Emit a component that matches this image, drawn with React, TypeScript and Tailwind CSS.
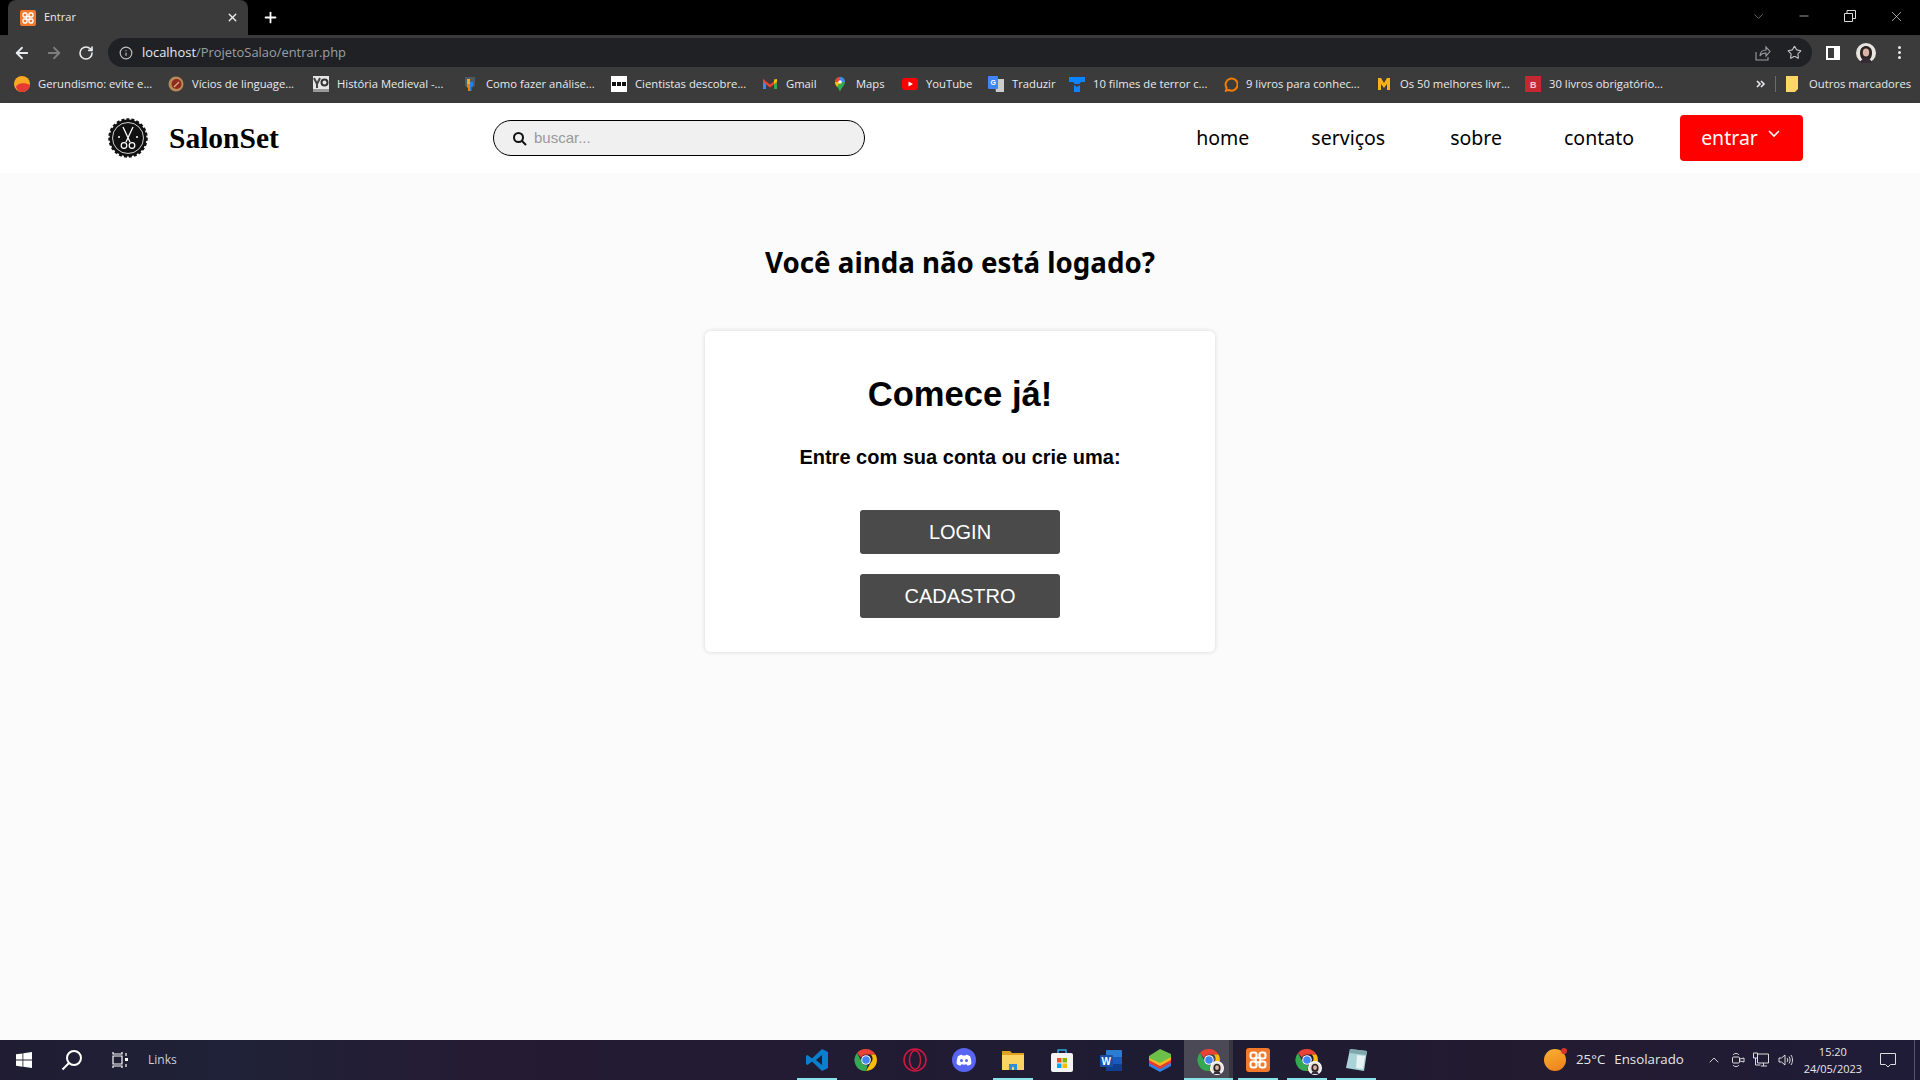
import { ArrowLeft, ArrowRight, ChevronDown, Info, Minus, Plus, RotateCw, Star, X } from "lucide-react";
import type { ReactNode } from "react";

const Xampp = ({ size = 16 }: { size?: number }) => (
  <svg width={size} height={size} viewBox="0 0 16 16" className="shrink-0">
    <rect width="16" height="16" rx="2" fill="#f4792b" />
    <g fill="none" stroke="#fff" strokeWidth="1.400">
      <rect x="3" y="3" width="4" height="4" rx="1.500" />
      <rect x="9" y="3" width="4" height="4" rx="1.500" />
      <rect x="3" y="9" width="4" height="4" rx="1.500" />
      <rect x="9" y="9" width="4" height="4" rx="1.500" />
      <rect x="6.500" y="6.500" width="3" height="3" />
    </g>
  </svg>
);

const Chrome = ({ size = 24 }: { size?: number }) => (
  <svg width={size} height={size} viewBox="0 0 24 24" className="shrink-0">
    <path d="M12 1a11 11 0 0 1 9.500 5.500H12a5.500 5.500 0 0 0-5 3.200L3 5A11 11 0 0 1 12 1Z" fill="#ea4335" />
    <path d="M21.500 6.500A11 11 0 0 1 12 23l4.700-8.200a5.500 5.500 0 0 0 0-8.300Z" fill="#fbbc04" />
    <path d="M3 5l4.700 8.500a5.500 5.500 0 0 0 6 3.700L12 23A11 11 0 0 1 3 5Z" fill="#34a853" />
    <circle cx="12" cy="12" r="4.800" fill="#fff" />
    <circle cx="12" cy="12" r="3.800" fill="#4285f4" />
  </svg>
);

const Avatar = ({ size = 20 }: { size?: number }) => (
  <svg width={size} height={size} viewBox="0 0 20 20" className="shrink-0">
    <circle cx="10" cy="10" r="10" fill="#e8e4e0" />
    <path d="M4 10c0-5 3-7 6-7s6 2 6 7c0 3-1 5-2 6H6c-1-1-2-3-2-6Z" fill="#2b2222" />
    <ellipse cx="10" cy="9.500" rx="3.200" ry="4" fill="#d9b3a3" />
    <path d="M4 20c1-4 4-5 6-5s5 1 6 5Z" fill="#332a33" />
  </svg>
);

const ChromeBadge = () => (
  <div className="relative">
    <Chrome />
    <div className="absolute -right-[3px] -bottom-[3px] rounded-full bg-white p-px">
      <Avatar size={12} />
    </div>
  </div>
);

const favicons: Record<string, ReactNode> = {
  gerund: (
    <svg width="16" height="16" viewBox="0 0 16 16">
      <circle cx="8" cy="8" r="8" fill="#f9a825" />
      <path d="M2 11c1-4 9-5 14-2-1 5-4 7-8 7-3 0-5-2-6-5Z" fill="#e53935" />
    </svg>
  ),
  vicios: (
    <svg width="16" height="16" viewBox="0 0 16 16">
      <circle cx="8" cy="8" r="7.500" fill="#b98a55" />
      <circle cx="8.500" cy="8" r="5" fill="#8f2a1c" />
      <path d="M6 11l5-5" stroke="#d9b27a" strokeWidth="1.200" />
    </svg>
  ),
  historia: (
    <svg width="16" height="16" viewBox="0 0 16 16">
      <rect width="16" height="16" fill="#e6e6e6" />
      <path d="M1 2l3 6 3-6M4 8v4" stroke="#444" strokeWidth="2" fill="none" />
      <circle cx="11.500" cy="6.500" r="3" fill="none" stroke="#333" strokeWidth="2" />
      <rect y="13" width="16" height="3" fill="#999" />
    </svg>
  ),
  analise: (
    <svg width="16" height="16" viewBox="0 0 16 16">
      <path d="M3 1h10v9l-3 2v3H6v-3L3 10Z" fill="#4c5a66" />
      <path d="M5 3h3v5H5Z" fill="#f9a825" />
      <path d="M8 6h3v4l-2 1v4H8Z" fill="#1e88e5" />
      <path d="M5 8h3v7H6v-3L5 11Z" fill="#f57c00" />
    </svg>
  ),
  cientistas: (
    <svg width="16" height="16" viewBox="0 0 16 16">
      <rect width="16" height="16" fill="#fff" />
      <path d="M1 6h4v4H1ZM6 6h4v4H6ZM11 6h4v4h-4Z" fill="#111" />
    </svg>
  ),
  gmail: (
    <svg width="16" height="16" viewBox="0 0 16 16">
      <path d="M1 3v10h3V7Z" fill="#4285f4" />
      <path d="M15 3v10h-3V7Z" fill="#34a853" />
      <path d="M1 3l7 5.500L15 3v3l-7 5.500L1 6Z" fill="#ea4335" />
      <path d="M12 3.500L15 3v3l-3 2Z" fill="#fbbc04" />
    </svg>
  ),
  maps: (
    <svg width="16" height="16" viewBox="0 0 16 16">
      <path d="M8 1a5 5 0 0 1 5 5c0 3-3 5-5 9.500C6 11 3 9 3 6a5 5 0 0 1 5-5Z" fill="#34a853" />
      <path d="M8 1a5 5 0 0 1 5 5L8 6Z" fill="#4285f4" />
      <path d="M3 6a5 5 0 0 1 5-5v5Z" fill="#ea4335" />
      <path d="M3 6h5L5 11C4 9.500 3 8 3 6Z" fill="#fbbc04" />
      <circle cx="8" cy="6" r="1.800" fill="#fff" />
    </svg>
  ),
  youtube: (
    <svg width="16" height="16" viewBox="0 0 16 16">
      <rect y="2" width="16" height="12" rx="3" fill="#f00" />
      <path d="M6.500 5.500L11 8l-4.500 2.500Z" fill="#fff" />
    </svg>
  ),
  traduzir: (
    <svg width="16" height="16" viewBox="0 0 16 16">
      <path d="M6 3h10v13H8Z" fill="#ccc" />
      <rect width="10" height="13" rx="1" fill="#4285f4" />
      <text x="2.500" y="9" fontSize="7" fontWeight="700" fill="#fff" fontFamily="Liberation Sans">G</text>
    </svg>
  ),
  filmes: (
    <svg width="16" height="16" viewBox="0 0 16 16">
      <path d="M0 1h16v5h-4L10 8H6L4 6H0Z" fill="#0a84ff" />
      <path d="M5 9l3 2 3-2v7H5Z" fill="#0a84ff" />
    </svg>
  ),
  livros: (
    <svg width="16" height="16" viewBox="0 0 16 16">
      <path d="M4 14.500l.6-2.600A6 6 0 1 1 7 14c-1 0-2 0-3 .5Z" fill="none" stroke="#f57c00" strokeWidth="2" />
    </svg>
  ),
  melhores: (
    <svg width="16" height="16" viewBox="0 0 16 16">
      <path d="M2 2h3l3 5 3-5h3v12h-3V8l-3 4-3-4v6H2Z" fill="#fbb117" />
    </svg>
  ),
  obrig: (
    <svg width="16" height="16" viewBox="0 0 16 16">
      <rect width="16" height="16" fill="#c62833" />
      <text x="5" y="12" fontSize="9" fontWeight="700" fill="#f6c9cc" fontFamily="Liberation Sans">B</text>
    </svg>
  ),
};

const bookmarks = [
  { icon: "gerund", label: "Gerundismo: evite e...", width: "w-[114px]" },
  { icon: "vicios", label: "Vícios de linguage...", width: "w-[105px]" },
  { icon: "historia", label: "História Medieval -...", width: "w-[109px]" },
  { icon: "analise", label: "Como fazer análise...", width: "w-[109px]" },
  { icon: "cientistas", label: "Cientistas descobre...", width: "w-[111px]" },
  { icon: "gmail", label: "Gmail", width: "w-[30px]" },
  { icon: "maps", label: "Maps", width: "w-[30px]" },
  { icon: "youtube", label: "YouTube", width: "w-[46px]" },
  { icon: "traduzir", label: "Traduzir", width: "w-[41px]" },
  { icon: "filmes", label: "10 filmes de terror c...", width: "w-[113px]" },
  { icon: "livros", label: "9 livros para conhec...", width: "w-[114px]" },
  { icon: "melhores", label: "Os 50 melhores livr...", width: "w-[109px]" },
  { icon: "obrig", label: "30 livros obrigatório...", width: "w-[114px]" },
];

const BrowserChrome = () => (
  <div className="font-['Open_Sans',sans-serif] text-white">
    {/* abas */}
    <div className="flex h-[35px] items-stretch bg-black">
      <div className="ml-2 flex w-[240px] items-center rounded-t-lg bg-[#3b3b3b] pr-[9px] pl-3">
        <Xampp />
        <span className="ml-2 text-[11px] text-[#e8eaed]">Entrar</span>
        <X className="ml-auto" size={13} strokeWidth={2.5} color="#e8eaed" />
      </div>
      <div className="ml-[14px] flex items-center">
        <Plus size={17} strokeWidth={2.5} />
      </div>
      <div className="ml-auto flex items-center pr-[15px] pb-[3px] text-[#ddd]">
        <ChevronDown className="mr-[31px]" size={15} strokeWidth={1} color="#aaa" />
        <Minus className="mr-[33px]" size={14} strokeWidth={1.2} />
        <svg className="mr-[32px]" width="12" height="12" viewBox="0 0 12 12" fill="none" stroke="#ddd">
          <path d="M.5 3.500h8v8h-8ZM3 3.500V.500h8.500v8H8.500" />
        </svg>
        <X size={17} strokeWidth={1} />
      </div>
    </div>
    {/* barra de endereço */}
    <div className="flex h-[32px] items-center bg-[#3b3b3b] pt-[3px]">
      <div className="flex w-[108px] items-center pl-[13px]">
        <ArrowLeft size={18} strokeWidth={2.4} color="#e8eaed" />
        <ArrowRight className="ml-[14px]" size={18} strokeWidth={2.4} color="#7d7e80" />
        <RotateCw className="ml-[15px]" size={16} strokeWidth={2.4} color="#e8eaed" />
      </div>
      <div className="flex h-[29px] w-[1704px] items-center rounded-full bg-[#202124] pr-[8px] pl-[11px]">
        <Info size={14} color="#bdc1c6" />
        <span className="ml-[9px] text-[12.900px] text-[#e8eaed]">
          localhost<span className="text-[#9aa0a6]">/ProjetoSalao/entrar.php</span>
        </span>
        <svg className="ml-auto" width="16" height="16" viewBox="0 0 16 16" fill="none" stroke="#9aa0a6" strokeWidth="1.100">
          <path d="M1 7v8h12v-3M5 11c0-4 3-6 6-6V2l4 4.500-4 4.500V8c-3 0-5 1-6 3Z" />
        </svg>
        <Star className="ml-[16px] mr-[2px]" size={15} strokeWidth={1.8} color="#bdc1c6" />
      </div>
      <div className="flex flex-1 items-center pl-[14px]">
        <div className="h-[14px] w-[14px] border-2 border-white bg-[linear-gradient(90deg,#3b3b3b_60%,#fff_60%)]" />
        <div className="ml-[16px] rounded-full">
          <Avatar />
        </div>
        <div className="ml-[22px] flex flex-col gap-[2px]">
          <span className="h-[3px] w-[3px] rounded-full bg-[#e8eaed]" />
          <span className="h-[3px] w-[3px] rounded-full bg-[#e8eaed]" />
          <span className="h-[3px] w-[3px] rounded-full bg-[#e8eaed]" />
        </div>
      </div>
    </div>
    {/* favoritos */}
    <div className="flex h-[36px] items-center bg-[#3b3b3b] pb-[2px] pl-[14px] text-[11.250px] text-[#e8eaed]">
      {bookmarks.map((b) => (
        <div key={b.label} className="mr-[16px] flex items-center gap-2">
          {favicons[b.icon]}
          <span className={`${b.width} overflow-visible whitespace-nowrap`}>{b.label}</span>
        </div>
      ))}
      <div className="ml-[77px] flex items-center">
        <svg width="10" height="10" viewBox="0 0 10 10" fill="none" stroke="#e8eaed" strokeWidth="1.600">
          <path d="M1 2l3 3-3 3M5 2l3 3-3 3" />
        </svg>
        <div className="ml-[9px] h-[16px] w-px bg-[#6b6b6b]" />
        <svg className="ml-[9px]" width="14" height="16" viewBox="0 0 14 16">
          <path d="M1 0h12v13l-3 3H1Z" fill="#fdd663" />
        </svg>
        <span className="ml-[10px] whitespace-nowrap">Outros marcadores</span>
      </div>
    </div>
  </div>
);

const Logo = () => (
  <svg width="40" height="40" viewBox="0 0 40 40" className="shrink-0">
    <circle cx="20" cy="20" r="18.500" fill="#111" stroke="#111" strokeWidth="2.500" strokeDasharray="3 2" />
    <circle cx="20" cy="20" r="15.500" fill="none" stroke="#fff" strokeWidth="0.800" />
    <path d="M15 9l7 15M25 9l-7 15" stroke="#fff" strokeWidth="1.300" />
    <circle cx="16" cy="27.500" r="2.800" fill="none" stroke="#fff" strokeWidth="1.200" />
    <circle cx="24" cy="27.500" r="2.800" fill="none" stroke="#fff" strokeWidth="1.200" />
    <circle cx="11" cy="19" r="1" fill="#fff" />
    <circle cx="29" cy="19" r="1" fill="#fff" />
  </svg>
);

const Navbar = () => (
  <nav className="flex h-[70px] items-center bg-white shadow-[0_1px_4px_rgba(0,0,0,0.15)]">
    <div className="flex w-[493px] items-center pl-[108px]">
      <Logo />
      <span className="ml-[21px] font-['Liberation_Serif',serif] text-[29.500px] font-bold text-black">SalonSet</span>
    </div>
    <div className="flex h-[36px] w-[372px] items-center rounded-full border border-black bg-[#f0f0f0] pl-[18px]">
      <svg width="15" height="15" viewBox="0 0 15 15" fill="none" stroke="#111" strokeWidth="2">
        <circle cx="6.500" cy="6.500" r="4.500" />
        <path d="M10 10l4 4" />
      </svg>
      <span className="ml-[7px] font-['Liberation_Sans',sans-serif] text-[15px] text-[#999999]">buscar...</span>
    </div>
    <div className="ml-auto flex items-center pr-[117px] font-['Noto_Sans',sans-serif] text-[19.500px] text-black">
      <a className="mr-[62px]">home</a>
      <a className="mr-[65px]">serviços</a>
      <a className="mr-[62px]">sobre</a>
      <a className="mr-[46px]">contato</a>
      <button className="flex h-[46px] w-[123px] items-center justify-center rounded-[4px] bg-[#ff0000] pr-[2px] text-white">
        entrar
        <svg className="mb-2 ml-[10px]" width="12" height="8" viewBox="0 0 12 8" fill="none" stroke="#fff" strokeWidth="1.600">
          <path d="M1 1l5 5 5-5" />
        </svg>
      </button>
    </div>
  </nav>
);

const Main = () => (
  <main className="flex flex-1 flex-col items-center bg-[#fbfbfb]">
    <h1 className="mt-[71px] font-['Noto_Sans',sans-serif] text-[27.700px] leading-[36px] font-bold text-black">
      Você ainda não está logado?
    </h1>
    <div className="mt-[51px] flex h-[321px] w-[510px] flex-col items-center rounded-[6px] bg-white pt-[41px] font-['Liberation_Sans',sans-serif] shadow-[0_0_5px_rgba(0,0,0,0.14)]">
      <h2 className="text-[34.600px] leading-[44px] font-bold text-black">Comece já!</h2>
      <p className="mt-[28px] text-[20px] leading-[26px] font-bold text-black">Entre com sua conta ou crie uma:</p>
      <button className="mt-[40px] h-[44px] w-[200px] rounded-[3px] bg-[#4a4a4a] text-[20px] text-white">LOGIN</button>
      <button className="mt-[20px] h-[44px] w-[200px] rounded-[3px] bg-[#4a4a4a] text-[20px] text-white">CADASTRO</button>
    </div>
  </main>
);

const taskIcons: { icon: ReactNode; open?: boolean; active?: boolean }[] = [
  {
    open: true,
    icon: (
      <svg width="24" height="24" viewBox="0 0 24 24">
        <path d="M17 1l6 3v16l-6 3-10-9.500L2.500 17 1 16v-8l1.500-1L7 10.500Z" fill="#0a7fcb" />
        <path d="M17 7l-6 5 6 5Z" fill="#1f1c33" />
      </svg>
    ),
  },
  { icon: <Chrome /> },
  {
    icon: (
      <svg width="24" height="24" viewBox="0 0 24 24" fill="none" stroke="#d5173f" strokeWidth="1.500">
        <circle cx="12" cy="12" r="11" />
        <ellipse cx="12" cy="12" rx="5.500" ry="9.500" />
      </svg>
    ),
  },
  {
    icon: (
      <svg width="24" height="24" viewBox="0 0 24 24">
        <circle cx="12" cy="12" r="12" fill="#5865f2" />
        <path d="M6 8c2-1 3.500-1.300 4-1.300l.4.800h3.200l.4-.8c.5 0 2 .3 4 1.300 1 2.500 1.500 5 1.300 8-1.500 1-3 1.500-4 1.500l-.8-1.200c-2 .5-3 .5-5 0L8.700 17.500c-1 0-2.500-.5-4-1.500C4.500 13 5 10.500 6 8Z" fill="#fff" />
        <circle cx="9.500" cy="12.500" r="1.500" fill="#5865f2" />
        <circle cx="14.500" cy="12.500" r="1.500" fill="#5865f2" />
      </svg>
    ),
  },
  {
    open: true,
    icon: (
      <svg width="24" height="24" viewBox="0 0 24 24">
        <path d="M1 3h8l2 2h12v3H1Z" fill="#e0a020" />
        <path d="M1 7h22v15H1Z" fill="#fcd462" />
        <path d="M8 16h8v6h-3v-3h-2v3H8Z" fill="#2f8fd8" />
      </svg>
    ),
  },
  {
    icon: (
      <svg width="24" height="24" viewBox="0 0 24 24">
        <path d="M8 6V2h8v4" fill="none" stroke="#27a9e0" strokeWidth="1.500" />
        <rect x="1" y="5" width="22" height="19" rx="2" fill="#f3f3f3" />
        <path d="M7 10h4.500v4.500H7Z" fill="#f25022" />
        <path d="M12.500 10H17v4.500h-4.500Z" fill="#7fba00" />
        <path d="M7 15.500h4.500V20H7Z" fill="#00a4ef" />
        <path d="M12.500 15.500H17V20h-4.500Z" fill="#ffb900" />
      </svg>
    ),
  },
  {
    icon: (
      <svg width="24" height="24" viewBox="0 0 24 24">
        <rect x="7" y="2" width="16" height="21" rx="1" fill="#2b7cd3" />
        <rect x="7" y="9" width="16" height="7" fill="#185abd" />
        <rect x="7" y="16" width="16" height="7" fill="#103f91" />
        <rect x="1" y="7" width="13" height="12" rx="1" fill="#1a4fa8" />
        <text x="2.500" y="16.500" fontSize="10" fontWeight="700" fill="#fff" fontFamily="Liberation Sans">W</text>
      </svg>
    ),
  },
  {
    icon: (
      <svg width="24" height="24" viewBox="0 0 24 24">
        <path d="M1 14l11 6 11-6v4l-11 6-11-6Z" fill="#2f7fe0" />
        <path d="M1 11l11 6 11-6v4l-11 6-11-6Z" fill="#e63b2e" />
        <path d="M1 8l11 6 11-6v4l-11 6-11-6Z" fill="#f5b81f" />
        <path d="M1 8l11-7 11 5v3l-11 6L1 10Z" fill="#6cc04a" />
      </svg>
    ),
  },
  { open: true, active: true, icon: <ChromeBadge /> },
  { open: true, icon: <Xampp size={24} /> },
  { open: true, icon: <ChromeBadge /> },
  {
    open: true,
    icon: (
      <svg width="24" height="24" viewBox="0 0 24 24">
        <path d="M6 1l17 2-3 20-18-3Z" fill="#a9d3d6" />
        <path d="M6 1l17 2-.6 4L5.400 5Z" fill="#7fa8ad" />
        <path d="M13 7l8 1-2 13-7-1Z" fill="#e4f2f2" />
      </svg>
    ),
  },
];

const Taskbar = () => (
  <footer className="flex h-[40px] items-stretch bg-[linear-gradient(90deg,#1f1c33_0%,#1f2238_12%,#251b33_25%,#1e1c33_60%,#231b30_80%,#1f1c38_100%)] font-['Open_Sans',sans-serif] text-white">
    <div className="flex w-[792px] items-center">
      <div className="flex w-[48px] justify-center">
        <svg width="16" height="16" viewBox="0 0 16 16" fill="#fff">
          <path d="M0 2.300l6.500-.9v6.200H0ZM7.300 1.300L16 0v7.600H7.300ZM0 8.400h6.500v6.300L0 13.700ZM7.300 8.400H16V16l-8.700-1.200Z" />
        </svg>
      </div>
      <div className="flex w-[48px] justify-center">
        <svg width="22" height="22" viewBox="0 0 22 22" fill="none" stroke="#fff" strokeWidth="2">
          <circle cx="13" cy="9" r="7" />
          <path d="M8 14l-6.500 6.500" />
        </svg>
      </div>
      <div className="flex w-[48px] justify-center">
        <svg width="16" height="16" viewBox="0 0 16 16" fill="none" stroke="#fff" strokeWidth="1.200">
          <path d="M1 0v2h9V0M1 16v-2h9v2M1 4h9v8H1ZM14 1v3M14 12v3" />
          <rect x="13" y="6" width="3" height="3" fill="#fff" stroke="none" />
        </svg>
      </div>
      <span className="ml-[4px] text-[12px] text-[#cfcfd4]">Links</span>
    </div>
    <div className="flex w-[588px]">
      {taskIcons.map((t, i) => (
        <div key={i} className="flex w-[49px] flex-col items-center">
          <div className={`flex w-full flex-1 items-center justify-center pt-[2px] ${t.active ? "border-r-4 border-[#37363f] bg-[#4a4955] pl-[4px]" : ""}`}>
            {t.icon}
          </div>
          <div className={`h-[2px] ${t.active ? "w-full" : "w-[40px]"} ${t.open ? "bg-[#8be3ea]" : ""}`} />
        </div>
      ))}
    </div>
    <div className="flex flex-1 items-center pl-[164px]">
      <div className="relative h-[22px] w-[22px] rounded-full bg-[linear-gradient(160deg,#f9b233,#ee7d1a)]">
        <span className="absolute -top-[1px] -right-[1px] h-[6px] w-[6px] rounded-full bg-[#d9342b]" />
      </div>
      <span className="ml-[10px] text-[13.300px] whitespace-nowrap text-[#e6e6e6]">25°C</span>
      <span className="ml-[9px] text-[13.300px] whitespace-nowrap text-[#e6e6e6]">Ensolarado</span>
      <ChevronDown className="ml-[22px] rotate-180" size={16} strokeWidth={1.4} color="#ddd" />
      <svg className="ml-[9px]" width="14" height="16" viewBox="0 0 14 16" fill="none" stroke="#ddd">
        <path d="M2 3c1-2 5-2 6 0M2 13c1 2 5 2 6 0" />
        <rect x="1.500" y="5" width="7" height="6" rx="1" />
        <path d="M9 7l4-1v4l-4-1" />
      </svg>
      <svg className="ml-[8px]" width="16" height="16" viewBox="0 0 16 16" fill="none" stroke="#ddd">
        <path d="M4.500 2H15.500V11H4.500ZM8 14h6M10.500 11v3M.5 1h4v5h-4ZM2.500 6v7h5" />
      </svg>
      <svg className="ml-[9px]" width="16" height="16" viewBox="0 0 16 16" fill="none" stroke="#ddd">
        <path d="M1 6h2.500L7 3v10L3.500 10H1ZM9 6c1 1 1 3 0 4M11 4.500c1.500 2 1.500 5 0 7M13 3c2 3 2 7 0 10" />
      </svg>
      <div className="ml-[9px] flex w-[60px] flex-col items-center text-[11px] leading-[17px] whitespace-nowrap text-[#e6e6e6]">
        <span>15:20</span>
        <span>24/05/2023</span>
      </div>
      <svg className="ml-[17px]" width="16" height="16" viewBox="0 0 16 16" fill="none" stroke="#ddd">
        <path d="M.5 1.500h15v11h-5L8 15l-2.500-2.500h-5Z" />
      </svg>
      <div className="ml-auto h-full w-[6px] border-l border-[#55556a]" />
    </div>
  </footer>
);

export default function App() {
  return (
    <div className="flex h-[1080px] w-[1920px] flex-col overflow-hidden">
      <BrowserChrome />
      <Navbar />
      <Main />
      <Taskbar />
    </div>
  );
}
